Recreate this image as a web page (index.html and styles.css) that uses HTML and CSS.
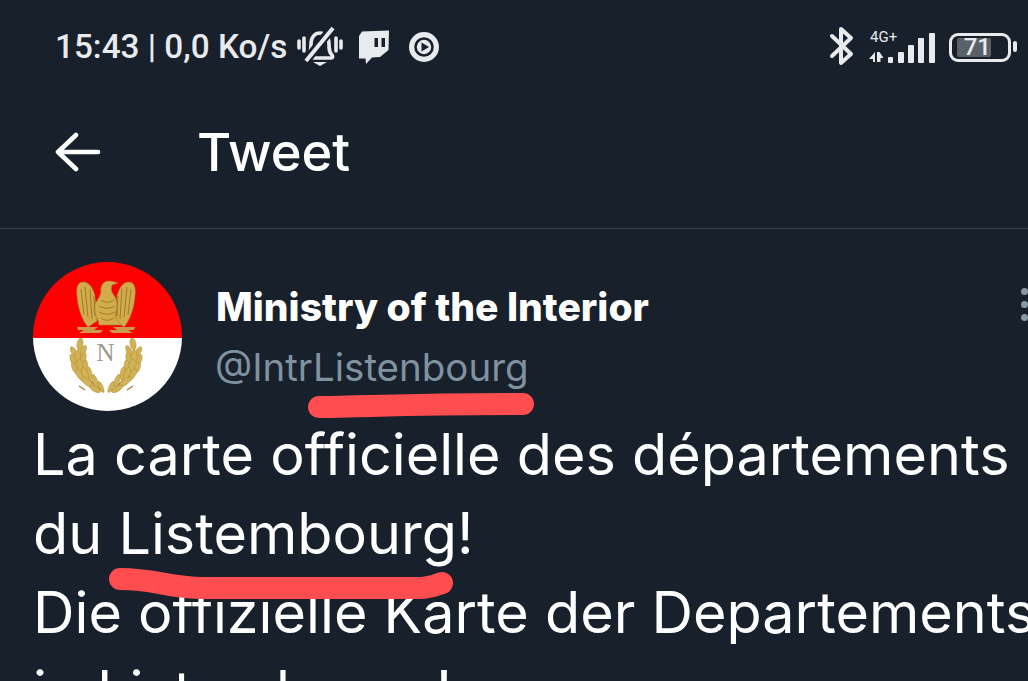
FILE: index.html
```html
<!DOCTYPE html>
<html lang="fr">
<head>
<meta charset="utf-8">
<title>Tweet</title>
<link rel="stylesheet" href="styles.css">
</head>
<body>
<div class="screen">
  <div class="status">
    <div class="status-left">
      <span class="clock">15:43 | 0,0 Ko/s</span>
      <svg class="ic-bell" viewBox="297 26 46 42" fill="none" stroke="#e8eaed" stroke-width="3.6">
        <path d="M309 55c2-3 2-6 2-11 0-7 4-11 9-11s9 4 9 11c0 5 0 8 3 11 1 1 1 3-1 3h-21c-2 0-2-2-1-3z"/>
        <path d="M333 27 305 62" stroke="#17202b" stroke-width="9"/>
        <path d="M333 28 306 61" stroke-width="4"/>
        <path d="M299 41v7M304 38v13M336 38v13M341 41v7" stroke-linecap="round"/>
        <path d="M313 62h14l-7 4z" fill="#e8eaed" stroke="none"/>
      </svg>
      <svg class="ic-twitch" viewBox="359 30 30 35">
        <path fill="#e8eaed" d="M362 31.500 389 30.500 388.500 50 380 57 372 57.500 366 64 365.500 58.500 359 58.500 359 36z"/>
        <path fill="#17202b" d="M374.500 38h3.500v9h-3.500zM381.500 38h3.500v9h-3.500z"/>
      </svg>
      <svg class="ic-play" viewBox="409 32 30 30">
        <circle cx="424" cy="47" r="15" fill="#e8eaed"/>
        <circle cx="424" cy="47" r="8.500" fill="none" stroke="#17202b" stroke-width="2.600"/>
        <path d="M421.500 42.500 429 47l-7.500 4.500z" fill="#17202b"/>
      </svg>
    </div>
    <div class="status-right">
      <svg class="ic-bt" viewBox="829 26 26 40" fill="none" stroke="#e8eaed" stroke-width="4" stroke-linejoin="round" stroke-linecap="round">
        <path d="M832 36 851 54 841 63V29L851 38 832 56"/>
      </svg>
      <div class="net">
        <span class="net-label">4G+</span>
        <svg class="ic-signal" viewBox="868 32 68 32" fill="#e8eaed">
          <path d="M875 52v10h-2v-3h-4zM877 52h2.500l4 6h-3v4H877z"/>
          <rect x="888" y="57" width="5" height="6" rx="1"/>
          <rect x="898" y="52" width="6" height="11" rx="1"/>
          <rect x="908" y="45" width="6" height="18" rx="1"/>
          <rect x="918" y="38" width="6" height="25" rx="1"/>
          <rect x="929" y="33" width="6" height="30" rx="1"/>
        </svg>
      </div>
      <div class="battery"><span class="battery-fill">71</span></div>
    </div>
  </div>

  <header class="bar">
    <svg class="back" viewBox="0 0 46 40" fill="none" stroke="#fff" stroke-width="4.600" stroke-linecap="round" stroke-linejoin="round">
      <path d="M43 20H4M21 3 3 20l18 17"/>
    </svg>
    <h1 class="bar-title">Tweet</h1>
  </header>

  <main class="tweet">
    <div class="author">
      <svg class="avatar" viewBox="0 0 149 149">
        <rect width="149" height="76" fill="#fe0000"/>
        <rect y="76" width="149" height="73" fill="#fff"/>
        <g fill="#d2ab4a" stroke="#a8832c" stroke-width=".6">
          <path d="M62 34C60 26 56 20 50 20c-5 0-7 5-6 14 1 12 5 24 11 31l9-6z"/>
          <path d="M84 34c2-8 6-14 12-14 5 0 7 5 6 14-1 12-5 24-11 31l-8-6z"/>
          <path d="M68 30c-1-6 2-11 8-11 3 0 6 1 9 2l-6 2c-1 3-1 6 1 9 4 5 5 12 3 18-1 6 1 9 6 13H66c0-6-4-8-5-14-1-8 6-12 7-19z"/>
        </g>
        <g fill="none" stroke="#96752a" stroke-width=".9">
          <path d="M48 27l3 26M52 25l3 30M57 27l2 30M61 34l1 20M98 27l-3 26M94 25l-3 30M89 27l-2 30M85 34l-1 20M68 38c4 3 9 3 13 0M66 44c5 3 11 3 16 0M66 50c5 3 11 3 16 0M68 56c4 3 9 3 13 0"/>
        </g>
        <path d="M44 65h21l-4 3h9l-3 3H46l5-3h-6zM102 65H80l4 3h-8l3 3h21l-5-3h6z" fill="#cc9a4a"/>
        <path d="M49 79c-8 14-6 30 20 50M98 79c8 14 6 30-20 50M52 128l-6-4M94 128l6-4" fill="none" stroke="#a8842e" stroke-width="1.400"/>
        <g fill="#d2b256" stroke="#a8842e" stroke-width=".4">
          <ellipse cx="47" cy="82" rx="3" ry="6" transform="rotate(10 47 82)"/>
          <ellipse cx="41" cy="90" rx="2.500" ry="6" transform="rotate(-30 41 90)"/>
          <ellipse cx="50" cy="89" rx="2.500" ry="6" transform="rotate(25 50 89)"/>
          <ellipse cx="40" cy="98" rx="2.500" ry="6" transform="rotate(-20 40 98)"/>
          <ellipse cx="50" cy="97" rx="2.800" ry="7" transform="rotate(15 50 97)"/>
          <ellipse cx="45" cy="95" rx="3" ry="7"/>
          <ellipse cx="42" cy="106" rx="2.800" ry="6" transform="rotate(-25 42 106)"/>
          <ellipse cx="52" cy="105" rx="2.800" ry="7" transform="rotate(5 52 105)"/>
          <ellipse cx="47" cy="104" rx="3" ry="7" transform="rotate(-10 47 104)"/>
          <ellipse cx="47" cy="113" rx="3" ry="7" transform="rotate(-35 47 113)"/>
          <ellipse cx="56" cy="112" rx="2.800" ry="7" transform="rotate(-5 56 112)"/>
          <ellipse cx="52" cy="112" rx="3" ry="7" transform="rotate(-20 52 112)"/>
          <ellipse cx="54" cy="120" rx="3" ry="7" transform="rotate(-50 54 120)"/>
          <ellipse cx="62" cy="119" rx="2.500" ry="7" transform="rotate(-20 62 119)"/>
          <ellipse cx="62" cy="127" rx="2.500" ry="6" transform="rotate(-60 62 127)"/>
          <ellipse cx="68" cy="125" rx="2" ry="6" transform="rotate(-25 68 125)"/>
          <ellipse cx="100" cy="82" rx="3" ry="6" transform="rotate(-10 100 82)"/>
          <ellipse cx="105" cy="90" rx="2.500" ry="6" transform="rotate(30 105 90)"/>
          <ellipse cx="96" cy="89" rx="2.500" ry="6" transform="rotate(-25 96 89)"/>
          <ellipse cx="106" cy="98" rx="2.500" ry="6" transform="rotate(20 106 98)"/>
          <ellipse cx="96" cy="97" rx="2.800" ry="7" transform="rotate(-15 96 97)"/>
          <ellipse cx="101" cy="95" rx="3" ry="7"/>
          <ellipse cx="104" cy="106" rx="2.800" ry="6" transform="rotate(25 104 106)"/>
          <ellipse cx="94" cy="105" rx="2.800" ry="7" transform="rotate(-5 94 105)"/>
          <ellipse cx="99" cy="104" rx="3" ry="7" transform="rotate(10 99 104)"/>
          <ellipse cx="99" cy="113" rx="3" ry="7" transform="rotate(35 99 113)"/>
          <ellipse cx="90" cy="112" rx="2.800" ry="7" transform="rotate(5 90 112)"/>
          <ellipse cx="94" cy="112" rx="3" ry="7" transform="rotate(20 94 112)"/>
          <ellipse cx="92" cy="120" rx="3" ry="7" transform="rotate(50 92 120)"/>
          <ellipse cx="84" cy="119" rx="2.500" ry="7" transform="rotate(20 84 119)"/>
          <ellipse cx="84" cy="127" rx="2.500" ry="6" transform="rotate(60 84 127)"/>
          <ellipse cx="78" cy="125" rx="2" ry="6" transform="rotate(25 78 125)"/>
        </g>
        <text class="avatar-n" x="72.500" y="99" text-anchor="middle">N</text>
      </svg>
      <div class="names">
        <div class="name">Ministry of the Interior</div>
        <div class="handle">@IntrListenbourg</div>
      </div>
      <div class="more"><i></i><i></i><i></i></div>
    </div>
    <p class="text">
      <span>La carte officielle des départements</span>
      <span>du Listembourg!</span>
      <span>Die offizielle Karte der Departements</span>
      <span>in Listembourg!</span>
    </p>
  </main>

  <svg class="scribble" viewBox="0 0 1028 681" fill="none" stroke="#ff4d50" stroke-width="22" stroke-linecap="round" stroke-linejoin="round">
    <path d="M319 407C380 406 420 404 523 404"/>
    <path d="M120 579C155 579 165 587 200 588H420C430 588 436 585 442 583"/>
  </svg>
</div>
</body>
</html>
```
FILE: styles.css
```css
* { box-sizing: border-box; }
html, body { margin: 0; padding: 0; background: #17202b; }
.screen {
  position: relative;
  width: 1028px;
  height: 681px;
  overflow: hidden;
  background: #17202b;
  color: #fff;
  font-family: Inter, "Liberation Sans", sans-serif;
}
.status {
  height: 95px;
  display: flex;
  justify-content: space-between;
  align-items: flex-start;
  padding: 26px 11px 0 55px;
  color: #e8eaed;
}
.status-left { display: flex; align-items: center; height: 42px; }
.clock { font-family: Roboto, sans-serif; font-size: 33.300px; line-height: 42px; width: 242px; white-space: nowrap; font-weight: 500; }
.ic-bell { width: 46px; height: 42px; }
.ic-twitch { width: 30px; height: 35px; margin-left: 16px; }
.ic-play { width: 30px; height: 30px; margin-left: 20px; }
.status-right { display: flex; align-items: flex-start; }
.ic-bt { width: 26px; height: 40px; }
.net { position: relative; width: 68px; height: 38px; margin: 6px 0 0 13px; }
.net-label { position: absolute; left: 2px; top: -4px; font-family: Roboto, sans-serif; font-size: 15px; line-height: 18px; }
.ic-signal { position: absolute; left: 0; top: 0; width: 68px; height: 32px; }
.battery {
  position: relative;
  width: 62px;
  height: 29px;
  margin: 7px 6px 0 13px;
  padding: 2px 17px 2px 5px;
  border: 3px solid #e8eaed;
  border-radius: 9px;
}
.battery::after {
  content: "";
  position: absolute;
  left: 61px;
  top: 5px;
  width: 4px;
  height: 11px;
  border-radius: 2px;
  background: #e8eaed;
}
.battery-fill {
  display: block;
  height: 19px;
  background: #5b6068;
  border-radius: 2px;
  font-family: Roboto, sans-serif;
  font-size: 24px;
  font-weight: 500;
  line-height: 19px;
  text-align: right;
}
.bar {
  height: 134px;
  display: flex;
  align-items: center;
  padding: 0 0 19px 55px;
  border-bottom: 1px solid #38424c;
}
.back { width: 46px; height: 40px; }
.bar-title { margin: 0 0 0 96px; font-size: 52.500px; line-height: 60px; font-weight: 500; }
.tweet { padding: 33px 0 0 33px; }
.author { display: flex; align-items: flex-start; position: relative; height: 149px; }
.avatar { width: 149px; height: 149px; border-radius: 50%; flex: none; }
.avatar-n { font-family: "Liberation Serif", serif; font-size: 25px; fill: #9b9a90; }
.names { margin-left: 34px; padding-top: 22px; }
.name { font-size: 39px; line-height: 46px; font-weight: 800; white-space: nowrap; }
.handle { margin-top: 14px; margin-left: -1px; color: #8092a0; font-size: 38.500px; line-height: 46px; font-weight: 400; white-space: nowrap; }
.more { position: absolute; left: 988px; top: 26px; display: flex; flex-direction: column; gap: 6px; }
.more i { display: block; width: 7px; height: 7px; border-radius: 50%; background: #8a98a5; }
.text { margin: 4px 0 0; font-size: 57.500px; line-height: 79px; font-weight: 400; }
.text span { display: block; white-space: nowrap; }
.scribble { position: absolute; left: 0; top: 0; width: 1028px; height: 681px; }
```
